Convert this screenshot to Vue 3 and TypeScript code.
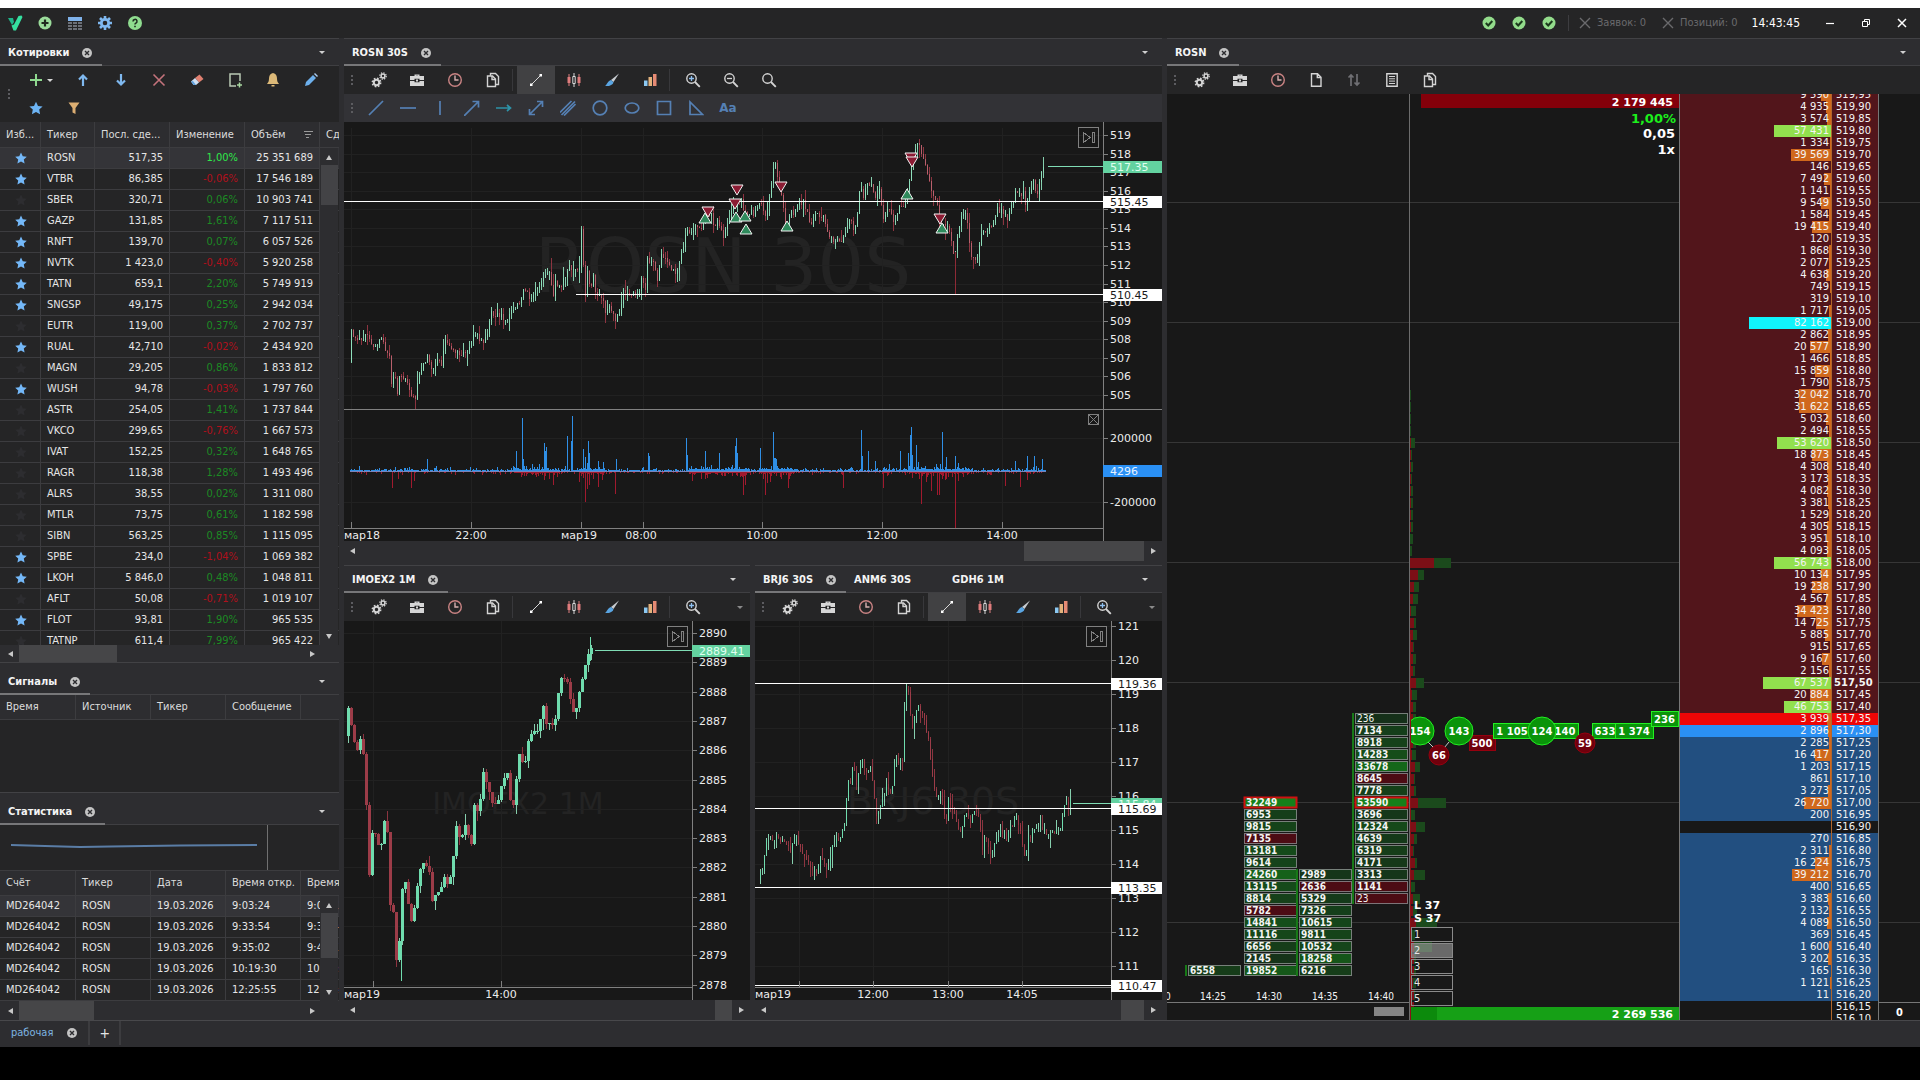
<script setup lang="ts">
type Point = [number, number]

interface Quote { fav: boolean; ticker: string; last: string; change: string; volume: string }

const quote = (fav: number, ticker: string, last: string, change: string, volume: string): Quote =>
  ({ fav: fav === 1, ticker, last, change, volume })

const quotes: Quote[] = [
  quote(1, 'ROSN', '517,35', '1,00%', '25 351 689'),
  quote(1, 'VTBR', '86,385', '-0,06%', '17 546 189'),
  quote(0, 'SBER', '320,71', '0,06%', '10 903 741'),
  quote(1, 'GAZP', '131,85', '1,61%', '7 117 511'),
  quote(1, 'RNFT', '139,70', '0,07%', '6 057 526'),
  quote(1, 'NVTK', '1 423,0', '-0,40%', '5 920 258'),
  quote(1, 'TATN', '659,1', '2,20%', '5 749 919'),
  quote(1, 'SNGSP', '49,175', '0,25%', '2 942 034'),
  quote(0, 'EUTR', '119,00', '0,37%', '2 702 737'),
  quote(1, 'RUAL', '42,710', '-0,02%', '2 434 920'),
  quote(0, 'MAGN', '29,205', '0,86%', '1 833 812'),
  quote(1, 'WUSH', '94,78', '-0,03%', '1 797 760'),
  quote(0, 'ASTR', '254,05', '1,41%', '1 737 844'),
  quote(0, 'VKCO', '299,65', '-0,76%', '1 667 573'),
  quote(0, 'IVAT', '152,25', '0,32%', '1 648 765'),
  quote(0, 'RAGR', '118,38', '1,28%', '1 493 496'),
  quote(0, 'ALRS', '38,55', '0,02%', '1 311 080'),
  quote(0, 'MTLR', '73,75', '0,61%', '1 182 598'),
  quote(0, 'SIBN', '563,25', '0,85%', '1 115 095'),
  quote(1, 'SPBE', '234,0', '-1,04%', '1 069 382'),
  quote(1, 'LKOH', '5 846,0', '0,48%', '1 048 811'),
  quote(0, 'AFLT', '50,08', '-0,71%', '1 019 107'),
  quote(1, 'FLOT', '93,81', '1,90%', '965 535'),
  quote(0, 'TATNP', '611,4', '7,99%', '965 422'),
]

const trades: [string, string][] = [
  ['9:03:24', '9:05:12'], ['9:33:54', '9:34:40'], ['9:35:02', '9:41:17'],
  ['10:19:30', '10:22:08'], ['12:25:55', '12:31:46'],
]

const quoteTools = ['add', 'up', 'down', 'cross', 'eraser', 'addrect', 'bell', 'pencil', 'star', 'funnel']
const drawTools = ['line', 'hline', 'vline', 'ray', 'harrow', 'darrow', 'channel', 'circle', 'ellipse', 'rect', 'triangle', 'text']
const setupTools = ['gears', 'case', 'clock', 'copy']
const viewTools = ['trend', 'candles', 'brush', 'bars']
const bookTools = ['gears', 'case', 'clock', 'doc', 'updown', 'list', 'copy']

/* Deterministic noise, so that every render draws the same candles */
function noise(seed: number): () => number {
  let s = seed
  return () => {
    s = (s * 1664525 + 1013904223) % 4294967296
    return s / 4294967296
  }
}

function parse(text: string): Point[] {
  return text.trim().split(/\s+/).map((p) => p.split(',').map(Number) as Point)
}

function valueAt(points: Point[], x: number): number {
  for (let i = 1; i < points.length; i++) {
    const [x0, y0] = points[i - 1]
    const [x1, y1] = points[i]
    if (x <= x1) return y0 + ((y1 - y0) * (x - x0)) / (x1 - x0)
  }
  return points[points.length - 1][1]
}

interface Candles { upBody: string; downBody: string; upWick: string; downWick: string }

function buildCandles(points: Point[], step: number, wick: number, jitter: number, seed: number): Candles {
  const rnd = noise(seed)
  const out: Candles = { upBody: '', downBody: '', upWick: '', downWick: '' }
  const end = points[points.length - 1][0]
  let open = points[0][1]
  for (let x = points[0][0]; x < end; x += step) {
    const close = valueAt(points, x + step) + (rnd() - 0.5) * jitter
    const top = Math.round(Math.min(open, close))
    const bottom = Math.max(top + 1, Math.round(Math.max(open, close)))
    const high = Math.round(top - rnd() * rnd() * wick)
    const low = Math.round(bottom + rnd() * rnd() * wick)
    const cx = x + 0.5
    if (close <= open) {
      out.upBody += `M${cx} ${top}V${bottom}`
      out.upWick += `M${cx} ${high}V${low}`
    } else {
      out.downBody += `M${cx} ${top}V${bottom}`
      out.downWick += `M${cx} ${high}V${low}`
    }
    open = close
  }
  return out
}

const rosnPath = parse(`
7,240 9,210 19,221 23,210 31,228 39,218 48,236 49,261 53,253 55,271 58,250 64,258 68,271 73,275 78,248 83,241
85,235 91,248 96,236 99,241 102,218 109,225 119,231 128,225 130,211 141,221 145,211 149,191 159,193 164,200 171,185
178,181 180,165 187,176 198,163 203,150 208,151 210,180 213,161 219,161 226,145 237,145 238,91 240,125 243,171
245,151 248,168 251,151 254,175 259,175 263,188 267,183 272,198 278,188 281,168 286,175 291,170 296,170 299,158
303,168 305,138 311,141 315,156 319,133 328,143 333,155 338,135 344,108 349,111 353,106 359,108 361,95 368,91
373,106 376,98 381,113 386,98 391,85 399,78 403,91 413,91 418,78 422,95 426,78 430,51 433,41 435,55 439,75 444,111
449,86 452,100 454,80 461,81 466,95 470,103 474,91 481,93 485,111 493,118 500,121 504,108 507,95 512,108 515,91
518,60 521,78 524,60 529,61 533,75 537,68 540,95 546,85 552,100 557,86 562,85 566,65 569,45 573,28 576,21 579,33
584,48 588,65 594,80 598,101 603,101 608,116 612,135 616,105 622,88 625,98 628,133 635,138 638,115 644,105 649,108
654,88 660,88 665,96 671,78 673,68 681,71 683,81 686,70 691,60 694,75 698,55 701,45`)

const imoexPath = parse(`
4,115 6,86 9,90 11,118 16,128 18,115 20,118 23,141 25,185 27,258 29,251 31,211 35,215 38,231 41,218 43,200 46,211
48,265 50,305 52,290 55,338 58,321 60,278 63,251 66,278 71,305 74,278 79,248 83,241 89,255 93,305 94,275 99,271
103,255 107,265 111,245 115,206 119,221 124,205 128,218 131,225 133,185 138,195 141,148 145,161 151,181 156,185
159,168 166,151 169,178 173,185 177,131 183,145 188,115 198,108 201,75 204,101 213,105 219,56 226,61 233,98 238,71
244,45 249,26`)

const brentPath = parse(`
5,258 10,245 13,221 20,216 28,221 37,228 43,215 48,231 57,245 63,251 68,238 75,248 80,221 87,218 92,201 94,151
96,171 99,145 103,161 108,133 112,150 117,145 121,175 123,195 128,181 133,166 138,175 142,135 145,143 149,141
151,85 153,68 156,71 158,111 162,95 166,85 170,98 175,118 178,148 183,178 188,171 192,205 195,178 200,191 208,215
212,188 217,201 222,185 226,198 229,228 232,215 238,235 243,218 248,208 253,218 262,195 267,208 271,235 275,218
282,206 288,208 297,215 307,208 311,185 316,181`)

const rosn = buildCandles(rosnPath, 2, 14, 7, 11)
const imoex = buildCandles(imoexPath, 3, 12, 3, 5)
const brent = buildCandles(brentPath, 2, 14, 6, 23)

/* Signed volume pane under the main chart; the zero level is at y 349 */
const buySpikes = parse(`
83,12 172,20 178,53 179,12 200,28 201,20 202,24 223,35 227,30 228,55 239,22 241,14 244,30 245,18 259,9 272,12
304,18 305,15 342,33 343,16 361,20 375,18 391,25 392,33 393,18 416,23 429,39 430,13 431,13 432,12 517,41 518,15
524,20 531,10 556,20 564,18 566,36 567,44 568,16 572,26 598,39 602,14 611,15 614,8 671,10 683,15 690,15 698,12`)
const sellSpikes = parse(`
48,17 54,8 67,17 70,10 209,14 205,8 241,31 243,18 245,14 254,16 271,23 348,10 357,8 399,24 401,14 421,24 423,12
437,8 444,17 499,17 539,17 577,33 587,20 593,24 595,24 601,9 611,57 614,10 661,15 676,16 683,9`)
const busy: Point[] = [[170, 215], [235, 260], [345, 405], [415, 450], [540, 545], [565, 625]]

function buildVolume(sign: 1 | -1, spikes: Point[], seed: number): string {
  const rnd = noise(seed)
  let d = ''
  for (let x = 6; x < 702; x++) {
    const dense = busy.some(([a, b]) => x >= a && x <= b)
    const size = rnd() * rnd() * rnd() * (dense ? 12 : 6) + (dense ? 1.5 : 0.5)
    d += `M${x + 0.5} 349V${(349 - sign * size).toFixed(1)}`
  }
  for (const [x, h] of spikes) d += `M${x + 0.5} 349V${349 - sign * h}`
  return d
}
const buyVolume = buildVolume(1, buySpikes, 3)
const sellVolume = buildVolume(-1, sellSpikes, 9)

interface Tag { y: number; text: string; kind: string }
interface Chart {
  title: string
  width: number
  height: number
  axisX: number
  axisY: number
  labels: { y: number; text: string }[]
  times: { x: number; text: string; tx: number }[]
  levels: { x: number; y: number }[]
  tags: Tag[]
  last: Point
  markSize: number
  markY: number
  candles: Candles
  bodyWidth: number
}

const range = (from: number, count: number, y0: number, pitch: number) =>
  Array.from({ length: count }, (_, i) => ({ y: Math.round(y0 + i * pitch), text: String(from - i) }))

const time = (x: number, text: string, tx = x) => ({ x, text, tx })

const mainChart: Chart = {
  title: 'ROSN 30S', width: 818, height: 419, axisX: 759, axisY: 406,
  labels: [...range(519, 15, 13, 18.57), { y: 316, text: '200000' }, { y: 380, text: '-200000' }],
  times: [time(7, 'мар18', 18), time(127, '22:00'), time(237, 'мар19', 235), time(299, '08:00', 297), time(418, '10:00'), time(538, '12:00'), time(658, '14:00')],
  levels: [{ x: 0, y: 79 }, { x: 232, y: 172 }],
  tags: [{ y: 44, text: '517.35', kind: 'live' }, { y: 79, text: '515.45', kind: 'level' }, { y: 172, text: '510.45', kind: 'level' }, { y: 348, text: '4296', kind: 'volume' }],
  last: [704, 44], markSize: 74, markY: 170, candles: rosn, bodyWidth: 1,
}

const smallCharts: { tabs: string[]; trendOn: boolean; thumb: string; chart: Chart }[] = [
  {
    tabs: ['IMOEX2 1M'], trendOn: false, thumb: 'thumb-s',
    chart: {
      title: 'IMOEX2 1M', width: 406, height: 379, axisX: 348, axisY: 366,
      labels: range(2890, 13, 12, 29.3),
      times: [time(29, 'мар19', 18), time(157, '14:00')],
      levels: [], tags: [{ y: 29, text: '2889.41', kind: 'live' }],
      last: [251, 29], markSize: 30, markY: 193, candles: imoex, bodyWidth: 3,
    },
  },
  {
    tabs: ['BRJ6 30S', 'ANM6 30S', 'GDH6 1M'], trendOn: true, thumb: 'thumb-m',
    chart: {
      title: 'BRJ6 30S', width: 407, height: 379, axisX: 356, axisY: 366,
      labels: range(121, 11, 5, 34),
      times: [time(44, 'мар19', 18), time(118, '12:00'), time(193, '13:00'), time(267, '14:05')],
      levels: [{ x: 0, y: 62 }, { x: 0, y: 187 }, { x: 0, y: 266 }, { x: 0, y: 364 }],
      tags: [{ y: 182, text: '115.84', kind: 'live' }, { y: 62, text: '119.36', kind: 'level' }, { y: 187, text: '115.69', kind: 'level' }, { y: 266, text: '113.35', kind: 'level' }, { y: 364, text: '110.47', kind: 'level' }],
      last: [318, 182], markSize: 38, markY: 193, candles: brent, bodyWidth: 1,
    },
  },
]

/* Own deals on the main chart: x, y, 1 for a sell */
const deals = [
  [364, 90, 1], [361, 96, 0], [393, 68, 1], [391, 82, 1], [392, 95, 0], [401, 94, 0], [402, 107, 0],
  [437, 65, 1], [443, 104, 0], [567, 36, 1], [568, 40, 1], [563, 72, 0], [596, 97, 1], [598, 106, 0],
].map(([x, y, s]) => ({ x, y, sell: s === 1 }))

function dealPath(x: number, y: number, sell: boolean): string {
  return sell ? `M${x - 6} ${y - 5}H${x + 6}L${x} ${y + 5}Z` : `M${x - 6} ${y + 5}H${x + 6}L${x} ${y - 5}Z`
}

/* Order book, best levels in the middle */
const sizes = [
  9590, 4935, 3574, 57431, 1334, 39569, 146, 7492, 1141, 9549, 1584, 19415, 120, 1868, 2077, 4638, 749, 319, 1717, 82162,
  2862, 20577, 1466, 15859, 1790, 32042, 31622, 5032, 2494, 53620, 18873, 4308, 3173, 4082, 3381, 1529, 4305, 3951, 4093, 56743,
  10134, 19238, 4567, 34423, 14725, 5885, 915, 9167, 2156, 67537, 20884, 46753, 3939, 2896, 2285, 16417, 1203, 861, 3273, 26720,
  200, 0, 270, 2311, 16224, 39212, 400, 3383, 2132, 4089, 369, 1600, 3202, 165, 1121, 11, 0, 0,
]
const bestAsk = 52

const book = sizes.map((size, i) => {
  const cents = 51995 - i * 5
  const side = size === 0 ? 'none' : i < bestAsk ? 'ask' : i === bestAsk ? 'best-ask' : i === bestAsk + 1 ? 'best-bid' : 'bid'
  return {
    price: `${Math.floor(cents / 100)},${String(cents % 100).padStart(2, '0')}`,
    size: size ? String(size).replace(/(\d)(?=(\d{3})+$)/g, '$1 ') : '',
    side,
    round: cents === 51750,
    bar: Math.round(size / 1000),
    tone: size > 80000 ? 'huge' : size > 40000 ? 'big' : 'usual',
  }
})

/* Clusters: r marks a sell-side cell, h the heaviest one */
const clusters = [
  { x: 21, row: 21, edge: true, cells: '6558' },
  { x: 77, row: 7, edge: false, cells: '32249h 6953 9815 7135r 13181 9614 24260 13115 8814 5782r 14841 11116 6656 2145 19852' },
  { x: 132, row: 13, edge: true, cells: '2989 2636r 5329 7326 10615 9811 10532 18258 6216' },
  { x: 188, row: 0, edge: true, cells: '236 7134 8918 14283 33678 8645r 7778 53590h 3696 12324 4639 6319 4171 3313 1141r 23r' },
].map((c) => ({
  x: c.x,
  edge: c.edge,
  top: 619 + c.row * 12,
  cells: c.cells.split(' ').map((t, i) => {
    const value = parseInt(t, 10)
    return {
      value,
      y: 619 + (c.row + i) * 12,
      kind: t.endsWith('r') ? 'sell' : t.endsWith('h') ? 'heavy' : 'buy',
      glow: Math.min(0.55, value / 50000),
      bold: value > 500,
    }
  }),
}))

const tickBoxes = [
  { x: 60, y: 641, w: 26, text: '500', sell: true },
  { x: 84, y: 629, w: 38, text: '1 105', sell: false },
  { x: 143, y: 629, w: 26, text: '140', sell: false },
  { x: 183, y: 629, w: 26, text: '633', sell: false },
  { x: 206, y: 629, w: 38, text: '1 374', sell: false },
  { x: 242, y: 617, w: 27, text: '236', sell: false },
]
const tickDots = [
  { x: 11, y: 637, r: 14, text: '154', sell: false },
  { x: 50, y: 637, r: 14, text: '143', sell: false },
  { x: 30, y: 661, r: 10, text: '66', sell: true },
  { x: 133, y: 637, r: 14, text: '124', sell: false },
  { x: 176, y: 649, r: 10, text: '59', sell: true },
]

/* Volume profile along the left edge of the tick area */
const profile = (() => {
  const rnd = noise(77)
  const heavy: Record<number, Point> = { 29: [1, 5], 39: [24, 41], 40: [8, 14], 41: [4, 9], 42: [3, 8], 49: [6, 14], 56: [5, 10], 59: [8, 36], 61: [6, 15], 65: [4, 15], 67: [3, 10], 69: [6, 27], 71: [4, 22] }
  return Array.from({ length: 52 }, (_, k) => {
    const i = k + 25
    const base = i < 30 ? 1 : i < 39 ? 3 : 6
    const [sell, total] = heavy[i] ?? [Math.round(rnd() * base * 0.6) + (i > 38 ? 1 : 0), Math.round(base * (0.6 + rnd() * 0.6))]
    return { y: 12 * i - 4, sell, total }
  })
})()

const presets = [1, 2, 3, 4, 5]
</script>

<template>
  <div class="app">
    <svg class="defs" aria-hidden="true">
      <symbol id="logo" viewBox="0 0 16 16"><path d="M1 3h5l1 4-2 3z" fill="#1fb58a" /><path d="M4.500 10.500 7 9.500 11.500 1l3-.5 1 1.500L9 15.500H6.500z" fill="#35e0a0" /></symbol>
      <symbol id="pluscircle" viewBox="0 0 16 16"><circle cx="8" cy="8" r="6.500" fill="#9bdc9b" /><path d="M8 4.500v7M4.500 8h7" stroke="#1f2a1f" stroke-width="2.200" /></symbol>
      <symbol id="grid" viewBox="0 0 16 16"><path d="M1 2h14v4H1z" fill="#7fb2ea" /><path d="M1 7h4v2H1zM6 7h4v2H6zM11 7h4v2h-4zM1 10h4v2H1zM6 10h4v2H6zM11 10h4v2h-4zM1 13h4v2H1zM6 13h4v2H6zM11 13h4v2h-4z" fill="#6c7078" /></symbol>
      <symbol id="gear" viewBox="0 0 16 16"><path d="M8 1v14M1 8h14M3 3l10 10M13 3 3 13" stroke="#7fb8f0" stroke-width="2.600" /><circle cx="8" cy="8" r="3.700" fill="#252526" stroke="#7fb8f0" stroke-width="2.800" /></symbol>
      <symbol id="help" viewBox="0 0 16 16"><circle cx="8" cy="8" r="7" fill="#8fdc8f" /><path d="M6 6.400a2 2 0 1 1 2.800 1.800c-.6.300-.8.600-.8 1.400" fill="none" stroke="#1f2a1f" stroke-width="1.500" /><path d="M7.200 10.800h1.600v1.500H7.200z" fill="#1f2a1f" /></symbol>
      <symbol id="ok" viewBox="0 0 16 16"><circle cx="8" cy="8" r="6.500" fill="#93dc8b" /><path d="m4.800 8 2.400 2.500L11.300 6" fill="none" stroke="#1c3a1c" stroke-width="2" /></symbol>
      <symbol id="thincross" viewBox="0 0 16 16"><path d="m3 3 10 10M13 3 3 13" stroke="currentColor" stroke-width="1.400" /></symbol>
      <symbol id="minimize" viewBox="0 0 16 16"><path d="M4 8.500h8" stroke="#fff" stroke-width="1.200" /></symbol>
      <symbol id="restore" viewBox="0 0 16 16"><path d="M4.500 6.500h5v5h-5zM6.500 6V4.500h5v5H10" fill="none" stroke="#fff" /></symbol>
      <symbol id="close" viewBox="0 0 16 16"><path d="m4 4 8 8M12 4l-8 8" stroke="#fff" stroke-width="1.500" /></symbol>
      <symbol id="tabclose" viewBox="0 0 10 10"><circle cx="5" cy="5" r="5" fill="#c4c4c4" /><path d="m3 3 4 4M7 3 3 7" stroke="#2d2d30" stroke-width="1.400" /></symbol>
      <symbol id="add" viewBox="0 0 16 16"><path d="M8 2v12M2 8h12" stroke="#8fd98f" stroke-width="2" /></symbol>
      <symbol id="up" viewBox="0 0 16 16"><path d="M8 14V4M4 7.500 8 3.500l4 4" fill="none" stroke="#7fb8ee" stroke-width="2.200" /></symbol>
      <symbol id="down" viewBox="0 0 16 16"><path d="M8 2v10M4 8.500l4 4 4-4" fill="none" stroke="#7fb8ee" stroke-width="2.200" /></symbol>
      <symbol id="cross" viewBox="0 0 16 16"><path d="m2.500 2.500 11 11M13.500 2.500l-11 11" stroke="#c4737b" stroke-width="1.600" /></symbol>
      <symbol id="eraser" viewBox="0 0 16 16"><path d="m6 6 4.500-3.500 4 4.500L10 10.500z" fill="#e08070" /><path d="m6 6 4 4.500L7 13H4.500L2 9.500z" fill="#cfe0f2" /><path d="M2 9.500 4.500 13H7L4 9z" fill="#5fa0dc" /></symbol>
      <symbol id="addrect" viewBox="0 0 16 16"><path d="M13 9V2H3v12h6" fill="none" stroke="#b9c9b4" stroke-width="1.500" /><path d="M12.500 10.500v5M10 13h5" stroke="#a9d8a0" stroke-width="1.500" /></symbol>
      <symbol id="bell" viewBox="0 0 16 16"><path d="M8 1c-3 .5-4 3-4 5.500 0 2.500-.7 4-2 5.500h12c-1.300-1.500-2-3-2-5.500C12 4 11 1.500 8 1z" fill="#dcb978" /><path d="M6.500 13h3v1.500h-3z" fill="#dcb978" /></symbol>
      <symbol id="pencil" viewBox="0 0 16 16"><path d="m2 14 1-4 7-7 3 3-7 7z" fill="#6db0ec" /><path d="m11 2 1-1 3 3-1 1z" fill="#a9cdf2" /></symbol>
      <symbol id="star" viewBox="0 0 16 16"><path d="m8 1.800 2 4.200 4.600.5-3.400 3.100.9 4.600L8 11.900l-4.100 2.300.9-4.600L1.400 6.500 6 6z" fill="currentColor" /></symbol>
      <symbol id="funnel" viewBox="0 0 16 16"><path d="M2.500 2.500h11L9.500 8v6l-3-1.500V8z" fill="#dcae72" /></symbol>
      <symbol id="gears" viewBox="0 0 16 16"><g stroke="#d4d4d4" fill="none"><circle cx="5.500" cy="10.500" r="2.700" stroke-width="2" /><circle cx="5.500" cy="10.500" r="4.200" stroke-width="1.500" stroke-dasharray="1.700 1.600" /><circle cx="12" cy="4" r="1.900" stroke-width="1.500" /><circle cx="12" cy="4" r="3.200" stroke-width="1.300" stroke-dasharray="1.300 1.210" /></g></symbol>
      <symbol id="case" viewBox="0 0 16 16"><path d="M5.500 4V2.500h5V4H15v4h-4.500V6.800h-5V8H1V4zM7 4h2v-.3H7z" fill="#d6d6d6" /><path d="M1 9h4.500v1.200h5V9H15v5H1z" fill="#d6d6d6" /><path d="M7 7.500h2v2H7z" fill="#d6d6d6" /></symbol>
      <symbol id="clock" viewBox="0 0 16 16"><circle cx="8" cy="8" r="6.300" fill="none" stroke="#c98383" stroke-width="1.400" /><path d="M8 3.500V8h3.500" fill="none" stroke="#d8b0b0" stroke-width="1.400" /></symbol>
      <symbol id="copy" viewBox="0 0 16 16"><g fill="none" stroke="#d4d4d4" stroke-width="1.400"><path d="M5.500 3.700V1.500h5L13.500 4.500v8h-3" /><path d="M2.500 4h5l3 3v7.500h-8z" /><path d="M7 4v3.500h3.500" /></g></symbol>
      <symbol id="doc" viewBox="0 0 16 16"><path d="M3.500 1.700H9.500L13 5.200v9.100H3.500zM9.300 2v3.500h3.500" fill="none" stroke="#d4d4d4" stroke-width="1.400" /></symbol>
      <symbol id="updown" viewBox="0 0 16 16"><path d="M5 14V3M2.500 5.500 5 3l2.500 2.500M11 2v11M8.500 10.500 11 13l2.500-2.500" fill="none" stroke="#707074" stroke-width="1.700" /></symbol>
      <symbol id="list" viewBox="0 0 16 16"><path d="M2.800 1.700h10.400v12.600H2.800z" fill="none" stroke="#d4d4d4" stroke-width="1.400" /><path d="M5 4.500h6M5 6.800h6M5 9.100h6M5 11.500h6" stroke="#d4d4d4" /></symbol>
      <symbol id="trend" viewBox="0 0 16 16"><path d="m3.500 12.500 9-9" stroke="#d8d8d8" /><path d="M2 11.500h2.500V14H2zM11.500 2H14v2.500h-2.500z" fill="#fff" /></symbol>
      <symbol id="candles" viewBox="0 0 16 16"><path d="M3 2v12M13 2v12" stroke="#e08080" /><path d="M1.500 5h3v6h-3zM11.500 5h3v6h-3z" fill="#e07c7c" /><path d="M8 1v14" stroke="#dadada" /><path d="M6.800 4.500h2.400v7H6.800z" fill="#252526" stroke="#dadada" /></symbol>
      <symbol id="brush" viewBox="0 0 16 16"><path d="M15 1.500 9.500 10 7 8z" fill="#c8ccd0" /><path d="m7 8 2.500 2.200C9 13 5 14.500 1 14c2-1.200 2.500-5 6-6z" fill="#5aa5e2" /></symbol>
      <symbol id="bars" viewBox="0 0 16 16"><path d="M2 8.500h3.500V14H2z" fill="#8cc9f2" /><path d="M6.500 5H10v9H6.500z" fill="#e3b27c" /><path d="M11 2h3.500v12H11z" fill="#e58a74" /></symbol>
      <symbol id="zoomin" viewBox="0 0 16 16"><circle cx="6.500" cy="6.500" r="4.700" fill="none" stroke="#d4d4d4" stroke-width="1.400" /><path d="m10 10 4.800 4.800" stroke="#d4d4d4" stroke-width="1.800" /><path d="M6.500 4v5M4 6.500h5" stroke="#8fc0f0" stroke-width="1.300" /></symbol>
      <symbol id="zoomout" viewBox="0 0 16 16"><circle cx="6.500" cy="6.500" r="4.700" fill="none" stroke="#d4d4d4" stroke-width="1.400" /><path d="m10 10 4.800 4.800" stroke="#d4d4d4" stroke-width="1.800" /><path d="M4 6.500h5" stroke="#d4d4d4" stroke-width="1.300" /></symbol>
      <symbol id="zoom" viewBox="0 0 16 16"><circle cx="6.500" cy="6.500" r="4.700" fill="none" stroke="#d4d4d4" stroke-width="1.400" /><path d="m10 10 4.800 4.800" stroke="#d4d4d4" stroke-width="1.800" /></symbol>
      <symbol id="line" viewBox="0 0 16 16"><path d="M1 15 15 1" /></symbol>
      <symbol id="hline" viewBox="0 0 16 16"><path d="M0 8h16" /></symbol>
      <symbol id="vline" viewBox="0 0 16 16"><path d="M8 1v14" /></symbol>
      <symbol id="ray" viewBox="0 0 16 16"><path d="M0 16 14 2M8.500 1.500H14.500V7.500" /></symbol>
      <symbol id="harrow" viewBox="0 0 16 16"><path d="M0 8h14M11 5 14.500 8 11 11" stroke="#2e93a8" /></symbol>
      <symbol id="darrow" viewBox="0 0 16 16"><path d="M1.500 14.500 14.500 1.500M9 1.500h5.500V7M1.500 9v5.500H7" /></symbol>
      <symbol id="channel" viewBox="0 0 16 16"><path d="M0 12.500 11.500 1M4 15.500 15.500 4M1.500 15 15 1.500" /></symbol>
      <symbol id="circle" viewBox="0 0 16 16"><circle cx="8" cy="8" r="6.800" /></symbol>
      <symbol id="ellipse" viewBox="0 0 16 16"><ellipse cx="8" cy="8" rx="6.800" ry="5" /></symbol>
      <symbol id="rect" viewBox="0 0 16 16"><path d="M1.500 1.500h13v13h-13z" /></symbol>
      <symbol id="triangle" viewBox="0 0 16 16"><path d="M2 2v12.500h12.500z" /></symbol>
    </svg>

    <header class="titlebar">
      <div class="title-left">
        <button v-for="n in ['logo', 'pluscircle', 'grid', 'gear', 'help']" :key="n" type="button" class="title-btn" :aria-label="n">
          <svg class="ic"><use :href="'#' + n" /></svg>
        </button>
      </div>
      <div class="title-right">
        <svg v-for="n in 3" :key="n" class="ic status"><use href="#ok" /></svg>
        <span class="title-sep"></span>
        <button type="button" class="dim-btn"><svg class="ic"><use href="#thincross" /></svg>Заявок: 0</button>
        <button type="button" class="dim-btn"><svg class="ic"><use href="#thincross" /></svg>Позиций: 0</button>
        <time class="clock">14:43:45</time>
        <button v-for="n in ['minimize', 'restore', 'close']" :key="n" type="button" class="win-btn" :aria-label="n">
          <svg class="ic"><use :href="'#' + n" /></svg>
        </button>
      </div>
    </header>

    <main class="workspace">
      <div class="column">
        <section class="pane grow">
          <div class="tabs">
            <div class="tab on">Котировки<svg class="x"><use href="#tabclose" /></svg></div>
            <i class="drop"></i>
          </div>
          <div class="quote-tools">
            <i class="grip"></i>
            <div class="tool-wrap">
              <button v-for="t in quoteTools" :key="t" type="button" class="tool blue" :class="{ split: t === 'add' }" :aria-label="t">
                <svg class="ic"><use :href="'#' + t" /></svg><i v-if="t === 'add'" class="caret"></i>
              </button>
            </div>
          </div>
          <div class="table-box grow">
            <table class="data quotes">
              <colgroup><col class="w41"><col class="w54"><col class="w75"><col class="w75"><col class="w75"><col></colgroup>
              <thead>
                <tr>
                  <th>Изб...</th><th>Тикер</th><th>Посл. сде...</th><th>Изменение</th>
                  <th><span class="sorted">Объём<svg class="sort" viewBox="0 0 9 9"><path d="M0 1.500h9M1 4.500h6M2 7.500h3" stroke="#9a9a9a" /></svg></span></th><th>Сд</th>
                </tr>
              </thead>
              <tbody>
                <tr v-for="(q, i) in quotes" :key="q.ticker" :class="{ sel: i === 0 }">
                  <td class="fav" :class="{ off: !q.fav }"><svg class="ic s14"><use href="#star" /></svg></td>
                  <td>{{ q.ticker }}</td>
                  <td class="num">{{ q.last }}</td>
                  <td class="num" :class="q.change.startsWith('-') ? 'neg' : i === 0 ? 'hot' : 'pos'">{{ q.change }}</td>
                  <td class="num">{{ q.volume }}</td>
                  <td></td>
                </tr>
              </tbody>
            </table>
            <div class="vscroll quotes-scroll"><i class="ar up"></i><i class="thumb"></i><i class="ar down"></i></div>
          </div>
          <div class="hscroll h17"><i class="ar left"></i><i class="thumb thumb-quotes"></i><i class="ar right"></i></div>
        </section>

        <section class="pane">
          <div class="tabs spaced">
            <div class="tab on">Сигналы<svg class="x"><use href="#tabclose" /></svg></div>
            <i class="drop"></i>
          </div>
          <table class="data signals">
            <colgroup><col class="w76"><col class="w75"><col class="w75"><col class="w75"><col></colgroup>
            <thead><tr><th>Время</th><th>Источник</th><th>Тикер</th><th>Сообщение</th><th></th></tr></thead>
          </table>
          <div class="signals-empty"></div>
        </section>

        <section class="pane">
          <div class="tabs spaced">
            <div class="tab on">Статистика<svg class="x"><use href="#tabclose" /></svg></div>
            <i class="drop"></i>
          </div>
          <svg class="equity" viewBox="0 0 339 45">
            <path d="M11 20 45 21 80 22 110 21.500 180 20.500 257 20" fill="none" stroke="#5a7da6" stroke-width="2" />
            <path d="M267.500 0V46" stroke="#707070" />
          </svg>
          <div class="table-box">
            <table class="data stats">
              <colgroup><col class="w76"><col class="w75"><col class="w75"><col class="w75"><col></colgroup>
              <thead><tr><th>Счёт</th><th>Тикер</th><th>Дата</th><th>Время откр.</th><th>Время</th></tr></thead>
              <tbody>
                <tr v-for="(t, i) in trades" :key="t[0]" :class="{ sel: i === 0 }">
                  <td>MD264042</td><td>ROSN</td><td>19.03.2026</td><td>{{ t[0] }}</td><td>{{ t[1] }}</td>
                </tr>
              </tbody>
            </table>
            <div class="vscroll stats-scroll"><i class="ar up"></i><i class="thumb"></i><i class="ar down"></i></div>
          </div>
          <div class="hscroll h19"><i class="ar left"></i><i class="thumb thumb-stats"></i><i class="ar right"></i></div>
        </section>
      </div>

      <div class="column">
        <section class="pane">
          <div class="tabs">
            <div class="tab on">ROSN 30S<svg class="x"><use href="#tabclose" /></svg></div>
            <i class="drop"></i>
          </div>
          <div class="toolbar">
            <i class="grip"></i>
            <button v-for="t in setupTools" :key="t" type="button" class="tool" :aria-label="t"><svg class="ic"><use :href="'#' + t" /></svg></button>
            <i class="sep"></i>
            <button v-for="t in viewTools" :key="t" type="button" class="tool" :class="{ active: t === 'trend' }" :aria-label="t"><svg class="ic"><use :href="'#' + t" /></svg></button>
            <i class="sep"></i>
            <button v-for="t in ['zoomin', 'zoomout', 'zoom']" :key="t" type="button" class="tool" :aria-label="t"><svg class="ic"><use :href="'#' + t" /></svg></button>
          </div>
          <div class="toolbar draw">
            <i class="grip"></i>
            <button v-for="t in drawTools" :key="t" type="button" class="tool w32" :aria-label="t">
              <span v-if="t === 'text'">Aa</span><svg v-else class="ic"><use :href="'#' + t" /></svg>
            </button>
          </div>
        </section>

        <svg class="chart" :viewBox="`0 0 ${mainChart.width} ${mainChart.height}`">
          <text class="mark" :x="379" :y="mainChart.markY" :font-size="mainChart.markSize">{{ mainChart.title }}</text>
          <g class="gridline">
            <path v-for="l in mainChart.labels" :key="l.text" :d="`M0 ${l.y + 0.5}H${mainChart.axisX}`" />
            <path v-for="t in mainChart.times" :key="t.text" :d="`M${t.x + 0.5} 6V${mainChart.axisY}`" />
          </g>
          <path :d="mainChart.candles.upWick" stroke="#86cfae" />
          <path :d="mainChart.candles.downWick" stroke="#8c3440" />
          <path :d="mainChart.candles.upBody" stroke="#8fe0bc" />
          <path :d="mainChart.candles.downBody" stroke="#b8606c" />
          <path d="M611.500 130V172" stroke="#8e2a36" />
          <path :d="sellVolume" stroke="#a01a2e" />
          <path :d="buyVolume" stroke="#2f8fe6" />
          <path d="M6 349.500H702" stroke="#7b83b8" />
          <path v-for="l in mainChart.levels" :key="l.y" :d="`M${l.x} ${l.y + 0.5}H${mainChart.axisX}`" stroke="#fff" />
          <path :d="`M${mainChart.last[0]} ${mainChart.last[1] + 0.5}H${mainChart.axisX}`" stroke="#7fdcb4" />
          <path v-for="(d, i) in deals" :key="i" class="deal" :d="dealPath(d.x, d.y, d.sell)" :fill="d.sell ? '#8c1c34' : '#2f8a5c'" />
          <g fill="none" stroke="#808080">
            <path d="M734.500 5.500h20v20h-20zM739 10v11l7-5.500zM748.500 10.500h2v10h-2z" />
            <path d="M744.500 292.500h10v10h-10zM744.500 292.500l10 10M754.500 292.500l-10 10" />
            <path d="M759.500 0V419M0 406.500H759M0 287.500H818" />
            <path v-for="l in mainChart.labels" :key="l.text" :d="`M760 ${l.y + 0.5}h4`" />
            <path v-for="t in mainChart.times" :key="t.text" :d="`M${t.x + 0.5} 400v6`" />
          </g>
          <g class="axis">
            <text v-for="l in mainChart.labels" :key="l.text" x="766" :y="l.y + 4">{{ l.text }}</text>
            <text v-for="t in mainChart.times" :key="t.text" class="mid" :x="t.tx" :y="417">{{ t.text }}</text>
          </g>
          <g v-for="t in mainChart.tags" :key="t.text" class="axis" :class="t.kind">
            <rect :x="759" :y="t.y - 5" width="59" height="12" /><text x="766" :y="t.y + 5">{{ t.text }}</text>
          </g>
        </svg>
        <div class="hscroll h20"><i class="ar left"></i><i class="thumb thumb-main"></i><i class="ar right"></i></div>

        <div class="pair">
          <section v-for="p in smallCharts" :key="p.chart.title" class="pane">
            <div class="tabs">
              <div v-for="(t, i) in p.tabs" :key="t" class="tab" :class="{ on: i === 0 }">{{ t }}<svg class="x"><use href="#tabclose" /></svg></div>
              <i class="drop"></i>
            </div>
            <div class="toolbar">
              <i class="grip"></i>
              <button v-for="t in setupTools" :key="t" type="button" class="tool" :aria-label="t"><svg class="ic"><use :href="'#' + t" /></svg></button>
              <i class="sep"></i>
              <button v-for="t in viewTools" :key="t" type="button" class="tool" :class="{ active: p.trendOn && t === 'trend' }" :aria-label="t"><svg class="ic"><use :href="'#' + t" /></svg></button>
              <i class="sep"></i>
              <button type="button" class="tool" aria-label="zoomin"><svg class="ic"><use href="#zoomin" /></svg></button>
              <i class="drop more"></i>
            </div>
            <svg class="chart" :viewBox="`0 0 ${p.chart.width} ${p.chart.height}`">
              <text class="mark" :x="p.chart.axisX / 2" :y="p.chart.markY" :font-size="p.chart.markSize">{{ p.chart.title }}</text>
              <g class="gridline">
                <path v-for="l in p.chart.labels" :key="l.text" :d="`M0 ${l.y + 0.5}H${p.chart.axisX}`" />
                <path v-for="t in p.chart.times" :key="t.text" :d="`M${t.x + 0.5} 0V${p.chart.axisY}`" />
              </g>
              <path :d="p.chart.candles.upWick" stroke="#86cfae" />
              <path :d="p.chart.candles.downWick" stroke="#8c3440" />
              <path :d="p.chart.candles.upBody" stroke="#6fdcae" :stroke-width="p.chart.bodyWidth" />
              <path :d="p.chart.candles.downBody" stroke="#9c3c48" :stroke-width="p.chart.bodyWidth" />
              <path v-if="p.chart.bodyWidth === 3" d="M246.500 16V40M57.500 320V360" stroke="#6fdcae" />
              <path v-for="l in p.chart.levels" :key="l.y" :d="`M${l.x} ${l.y + 0.5}H${p.chart.axisX}`" stroke="#fff" />
              <path :d="`M${p.chart.last[0]} ${p.chart.last[1] + 0.5}H${p.chart.axisX}`" stroke="#7fdcb4" />
              <g fill="none" stroke="#808080">
                <path :d="`M${p.chart.axisX - 24.5} 5.500h20v20h-20zm4.500 4.500v11l7-5.500zm9.500 .5h2v10h-2z`" />
                <path :d="`M${p.chart.axisX + 0.5} 0V${p.chart.height}M0 ${p.chart.axisY + 0.5}H${p.chart.axisX}`" />
                <path v-for="l in p.chart.labels" :key="l.text" :d="`M${p.chart.axisX + 1} ${l.y + 0.5}h4`" />
                <path v-for="t in p.chart.times" :key="t.text" :d="`M${t.x + 0.5} ${p.chart.axisY - 6}v6`" />
              </g>
              <g class="axis">
                <text v-for="l in p.chart.labels" :key="l.text" :x="p.chart.axisX + 7" :y="l.y + 4">{{ l.text }}</text>
                <text v-for="t in p.chart.times" :key="t.text" class="mid" :x="t.tx" :y="p.chart.axisY + 11">{{ t.text }}</text>
              </g>
              <g v-for="t in p.chart.tags" :key="t.text" class="axis" :class="t.kind">
                <rect :x="p.chart.axisX" :y="t.y - 5" :width="p.chart.width - p.chart.axisX" height="12" />
                <text :x="p.chart.axisX + 7" :y="t.y + 5">{{ t.text }}</text>
              </g>
            </svg>
            <div class="hscroll h20"><i class="ar left"></i><i class="thumb" :class="p.thumb"></i><i class="ar right"></i></div>
          </section>
        </div>
      </div>

      <div class="column">
        <section class="pane grow">
          <div class="tabs">
            <div class="tab on">ROSN<svg class="x"><use href="#tabclose" /></svg></div>
            <i class="drop"></i>
          </div>
          <div class="toolbar">
            <i class="grip"></i>
            <button v-for="t in bookTools" :key="t" type="button" class="tool" :aria-label="t"><svg class="ic"><use :href="'#' + t" /></svg></button>
          </div>
          <div class="board">
            <svg class="clusters" viewBox="0 0 242 926">
              <g v-for="c in clusters" :key="c.x">
                <rect v-if="c.edge" :x="c.x - 3" :y="c.top" width="2" :height="c.cells.length * 12 - 1" fill="#177a17" />
                <g v-for="cell in c.cells" :key="cell.y">
                  <rect :x="c.x + 0.5" :y="cell.y + 0.5" width="52" height="10" :class="'cell-' + cell.kind" />
                  <rect v-if="cell.kind === 'buy'" :x="c.x + 1" :y="cell.y + 1" width="51" height="9" fill="#14961a" :fill-opacity="cell.glow" />
                  <text :x="c.x + 2" :y="cell.y + 9" :class="{ b: cell.bold }">{{ cell.value }}</text>
                </g>
              </g>
              <g class="times">
                <text x="-2" y="906">0</text>
                <text x="33" y="906">14:25</text><text x="89" y="906">14:30</text><text x="145" y="906">14:35</text><text x="201" y="906">14:40</text>
              </g>
              <path d="M0 908.500H242" stroke="#777" />
              <rect x="207" y="913" width="30" height="9" fill="#858585" />
            </svg>

            <div class="ticks">
              <svg viewBox="0 0 270 926">
                <g v-for="b in profile" :key="b.y">
                  <rect x="1" :y="b.y" :width="b.total" height="10" fill="#1b4a1c" />
                  <rect x="1" :y="b.y" :width="b.sell" height="10" fill="#7c0f16" />
                </g>
                <rect x="12" y="0" width="258" height="14" fill="#84000a" />
                <text class="total" x="264" y="12">2 179 445</text>
                <text class="info lime" x="267" y="29">1,00%</text>
                <text class="info" x="266" y="44">0,05</text>
                <text class="info" x="266" y="60">1x</text>
                <path d="M19 648 25 654M35 654l5-6" stroke="#c8c8c8" />
                <g v-for="b in tickBoxes" :key="b.text" :class="b.sell ? 'tick-sell' : 'tick-buy'">
                  <rect :x="b.x + 0.5" :y="b.y + 0.5" :width="b.w" height="15" />
                  <text :x="b.x + b.w / 2" :y="b.y + 12">{{ b.text }}</text>
                </g>
                <g v-for="d in tickDots" :key="d.text" :class="d.sell ? 'tick-sell' : 'tick-buy'">
                  <circle :cx="d.x" :cy="d.y" :r="d.r" />
                  <text :x="d.x" :y="d.y + 4">{{ d.text }}</text>
                </g>
                <text class="pos-text" x="5" y="815">L 37</text>
                <text class="pos-text" x="5" y="828">S 37</text>
                <rect x="0" y="913" width="270" height="13" fill="#16a016" />
                <rect x="0" y="913" width="28" height="13" fill="#0c8a0c" />
                <text class="total" x="264" y="924">2 269 536</text>
                <path d="M0.500 0V926" stroke="#6c6c6c" /><path d="M1.500 540V926" stroke="#8a1016" />
              </svg>
              <div class="presets">
                <button v-for="n in presets" :key="n" type="button" :class="{ on: n === 2 }">{{ n }}</button>
              </div>
            </div>

            <div class="book-box">
              <table class="book">
                <tbody>
                  <tr v-for="r in book" :key="r.price" :class="r.side">
                    <td class="size"><i class="bar" :class="r.tone" :style="{ width: r.bar + 'px' }"></i><span>{{ r.size }}</span></td>
                    <td class="price" :class="{ round: r.round }">{{ r.price }}</td>
                  </tr>
                </tbody>
              </table>
            </div>
            <div class="side"><span>0</span></div>
          </div>
        </section>
      </div>
    </main>

    <footer class="bottombar">
      <button type="button" class="ws on">рабочая<svg class="x"><use href="#tabclose" /></svg></button>
      <button type="button" class="ws plus" aria-label="Новая вкладка">+</button>
    </footer>
  </div>
</template>

<style>
html, body { margin: 0; background: #000; }
</style>

<style scoped>
.app {
  box-sizing: border-box; height: 100vh; display: flex; flex-direction: column;
  border-top: 8px solid #fff; padding-bottom: 33px; background: #000; overflow: hidden;
  font: 11px/14px "DejaVu Sans Condensed", "DejaVu Sans", "Noto Sans", sans-serif; color: #e6e6e6;
}
.defs { position: absolute; width: 0; height: 0; }
button { font: inherit; color: inherit; background: none; border: 0; padding: 0; margin: 0; display: flex; align-items: center; justify-content: center; }
.ic { width: 16px; height: 16px; flex: none; display: block; }
.s14 { width: 14px; height: 14px; }

.titlebar { flex: 0 0 30px; display: flex; justify-content: space-between; background: #252526; }
.title-left, .title-right { display: flex; align-items: center; }
.title-btn { width: 30px; height: 30px; }
.title-right { gap: 14px; }
.title-sep { width: 1px; height: 16px; background: #3d3d40; margin: 0 -6px 0 -3px; }
.dim-btn { gap: 4px; color: #6a6a6d; }
.clock { color: #fff; font-size: 12px; }
.win-btn { width: 36px; height: 30px; margin-left: -14px; }
.clock + .win-btn { margin-left: -2px; }

.workspace { flex: 1 1 0; min-height: 0; display: grid; grid-template-columns: 339fr 818fr 753fr; gap: 5px; background: #2d2d30; }
.column { min-width: 0; min-height: 0; display: flex; flex-direction: column; overflow: hidden; }
.pane { min-width: 0; display: flex; flex-direction: column; }
.grow { flex: 1 1 0; min-height: 0; }

.tabs { flex: none; height: 28px; box-sizing: border-box; display: flex; align-items: stretch; border-top: 1px solid #424245; border-bottom: 1px solid #3f3f42; background: #2d2d30; font-weight: bold; color: #f4f4f4; }
.tabs.spaced { height: 33px; padding-top: 5px; }
.tab { display: flex; align-items: center; gap: 13px; padding: 2px 10px 0 8px; border-bottom: 2px solid transparent; margin-bottom: -1px; }
.tab.on { border-bottom-color: #777779; }
.x { width: 10px; height: 10px; }
.tab:not(.on) .x { visibility: hidden; }
.drop { margin: auto 14px auto auto; border: 3px solid transparent; border-top-color: #d0d0d0; border-bottom: 0; }
.drop.more { margin-right: 7px; border-top-color: #8a8a8a; }

.toolbar { flex: none; height: 28px; display: flex; align-items: stretch; background: #252526; }
.draw { background: #323236; color: #5580b4; font: bold 12px/14px "DejaVu Sans", sans-serif; }
.draw .ic { fill: none; stroke: #5580b4; stroke-width: 1.7px; }
.tool { width: 38px; flex: none; }
.w32 { width: 32px; }
.tool.active { background: #414143; }
.sep { width: 5px; box-sizing: border-box; border-left: 1px solid #38383b; margin: 3px 0; }
.grip { width: 16px; flex: none; background: radial-gradient(circle at 50% 50%, #5c5c60 1px, transparent 1px) 0 0 / 16px 4px; margin: 8px 0; }
.quote-tools { flex: none; display: flex; background: #252526; align-items: center; padding-left: 1px; }
.quote-tools .grip { height: 12px; }
.tool-wrap { display: flex; flex-wrap: wrap; }
.tool-wrap .tool { height: 28px; }
.blue { color: #6db4f4; }
.tool.split { width: 47px; box-sizing: border-box; justify-content: flex-start; padding-left: 11px; }
.caret { border: 3px solid transparent; border-top-color: #d8d8d8; border-bottom: 0; margin-left: 3px; }

.table-box { position: relative; overflow: hidden; background: #252526; }
.data { width: 100%; table-layout: fixed; border-collapse: separate; border-spacing: 0; }
.data th, .data td { box-sizing: border-box; height: 21px; padding: 0 0 0 6px; text-align: left; font-weight: normal; white-space: nowrap; overflow: hidden; border-right: 1px solid #3c3c3f; border-bottom: 1px solid #3c3c3f; }
.data th { height: 25px; background: #2d2d30; color: #dcdcdc; }
.quotes th { height: 26px; }
.data th:last-child, .data td:last-child { border-right: 0; }
.sel td { background: #343438; }
.w41 { width: 41px; } .w54 { width: 54px; } .w75 { width: 75px; } .w76 { width: 76px; }
.data .num { text-align: right; padding: 0 6px 0 0; }
.data .fav { padding: 0 0 0 14px; color: #74b8f8; }
.data .fav.off { color: #2d2d30; }
.pos { color: #1c8a24; } .neg { color: #b0101c; } .hot { color: #2ee84a; }
.sorted { display: flex; align-items: center; justify-content: space-between; padding-right: 6px; }
.sort { width: 9px; height: 9px; }
.signals-empty { height: 72px; background: #252526; }
.equity { display: block; width: 100%; background: #252526; border-bottom: 1px solid #3c3c3f; box-sizing: border-box; }

.vscroll { position: absolute; right: 1px; bottom: 0; width: 18px; background: #2d2d30; display: flex; flex-direction: column; align-items: center; }
.quotes-scroll { top: 26px; }
.stats-scroll { top: 25px; }
.vscroll .thumb { width: 17px; height: 40px; background: #434346; margin: 5px 0 auto; }
.stats-scroll .thumb { height: 45px; }
.hscroll { flex: none; display: flex; align-items: center; padding: 0 6px; background: #2d2d30; }
.h17 { height: 17px; padding: 0 24px 0 8px; }
.h19 { height: 19px; padding: 0 24px 0 8px; }
.h20 { height: 20px; }
.hscroll .thumb { align-self: stretch; background: #464648; }
.thumb-quotes { width: 98px; margin: 0 auto 0 6px; }
.thumb-stats { width: 75px; margin: 0 auto 0 6px; }
.thumb-main { width: 120px; margin: 0 7px 0 auto; }
.thumb-s { width: 17px; margin: 0 7px 0 auto; }
.thumb-m { width: 23px; margin: 0 7px 0 auto; }
.ar { border: 3px solid transparent; }
.ar.left { border-width: 3px 5px 3px 0; border-right-color: #c8c8c8; }
.ar.right { border-width: 3px 0 3px 5px; border-left-color: #c8c8c8; }
.ar.up { border-width: 0 3px 5px; border-bottom-color: #c8c8c8; margin-top: 7px; }
.ar.down { border-width: 5px 3px 0; border-top-color: #c8c8c8; margin-bottom: 6px; }

.chart { display: block; width: 100%; background: #181818; }
.chart path { shape-rendering: crispEdges; }
.chart .deal { shape-rendering: auto; stroke: #f2f2f2; }
.mark { text-anchor: middle; fill: #232323; font-family: "DejaVu Sans", sans-serif; }
.gridline { stroke: #212121; }
.axis { font: 11px "DejaVu Sans", sans-serif; fill: #ececec; }
.mid { text-anchor: middle; }
.live rect { fill: #63d2a0; } .live text { fill: #e0fff0; }
.level rect { fill: #fff; } .level text { fill: #1a1a1a; }
.volume rect { fill: #2a90f4; } .volume text { fill: #e8f2ff; }
.pair { display: grid; grid-template-columns: 406fr 407fr; gap: 5px; padding-top: 4px; }

.board { flex: 1 1 0; min-height: 0; display: grid; grid-template-columns: 242fr 270fr 200px 41px; background: linear-gradient(transparent 119px, #363636 119px) 0 -11px / 100% 120px #181818; overflow: hidden; }
.board svg { display: block; width: 100%; }
.clusters text { font: 10px "DejaVu Sans Condensed", sans-serif; fill: #f4f4f4; }
.clusters .b { font-weight: bold; }
.cell-buy { fill: #16301a; stroke: #77807a; }
.cell-sell { fill: #4c0c14; stroke: #7e7478; }
.cell-heavy { fill: #15801a; stroke: #d01010; stroke-width: 2px; }
.ticks { position: relative; }
.ticks text { font: bold 10px "DejaVu Sans", sans-serif; fill: #fff; }
.ticks .total { font-size: 11px; text-anchor: end; }
.ticks .info { font-size: 13px; text-anchor: end; }
.ticks .lime { fill: #1cf01c; }
.ticks .pos-text { font-size: 11px; }
.tick-buy text, .tick-sell text { text-anchor: middle; }
.tick-buy rect, .tick-buy circle { fill: #0a940a; stroke: #22f022; }
.tick-sell rect, .tick-sell circle { fill: #70000c; stroke: #96000e; }
.presets { position: absolute; left: 2px; bottom: 14px; display: flex; flex-direction: column; gap: 1px; }
.presets button { width: 42px; height: 15px; box-sizing: border-box; border: 1px solid #8a8a8a; justify-content: flex-start; padding-left: 2px; font: 11px/12px "DejaVu Sans Condensed", sans-serif; }
.presets .on { background: rgba(160, 160, 160, 0.6); }

.book-box { min-height: 0; overflow: hidden; border-left: 1px solid #777; border-right: 1px solid #777; box-sizing: border-box; }
.book { width: 100%; margin-top: -5px; table-layout: fixed; border-collapse: separate; border-spacing: 0; font: 10px/12px "DejaVu Sans", sans-serif; color: #f4f4f4; }
.book td { height: 12px; padding: 0; }
.ask { background: #52151b; } .bid { background: #224f80; } .none { background: #181818; }
.best-ask { background: #ee0606; } .best-bid { background: #2a90f4; }
.size { width: 151px; text-align: right; position: relative; border-right: 1px solid #b0662c; }
.size span { position: relative; padding-right: 2px; }
.bar { position: absolute; right: 0; top: 0; height: 12px; }
.usual { background: #d0681c; } .big { background: #92e04e; } .huge { background: #10f4fc; }
.book .price { padding-left: 4px; }
.book .round { font-weight: bold; padding-left: 2px; }
.side { display: flex; flex-direction: column; justify-content: flex-end; }
.side span { height: 17px; border-top: 1px solid #777; text-align: center; font-weight: bold; line-height: 19px; color: #fff; background: #181818; }

.bottombar { flex: 0 0 27px; box-sizing: border-box; display: flex; background: #2d2d30; border-top: 1px solid #48484b; }
.ws { padding: 0 11px 0 11px; gap: 14px; border-right: 2px solid #3c3c3f; margin-bottom: 2px; }
.ws.on { color: #7db4e0; }
.ws.plus { padding: 0 9px; font-size: 14px; }
</style>
